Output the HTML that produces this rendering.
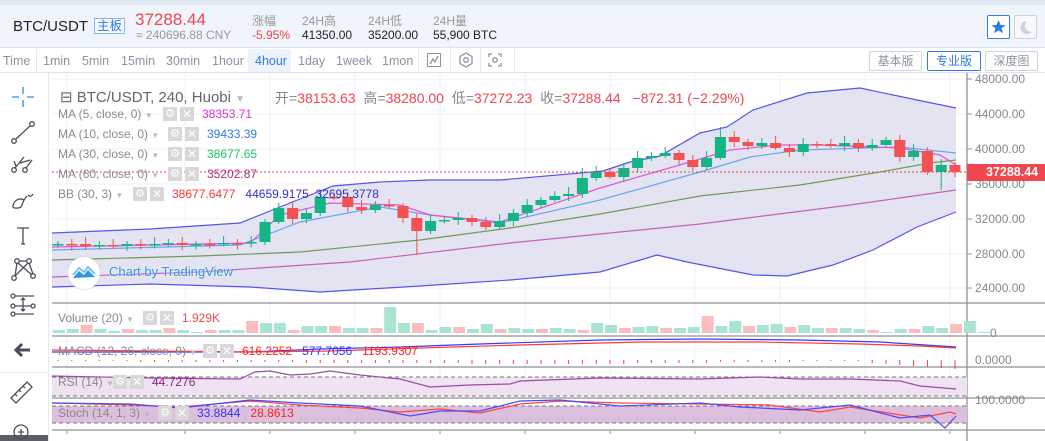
<!DOCTYPE html>
<html><head><meta charset="utf-8"><style>
*{margin:0;padding:0;box-sizing:border-box}
body{width:1045px;height:441px;overflow:hidden;background:#fff;font-family:"Liberation Sans","Noto Sans CJK SC",sans-serif;position:relative}
.a{position:absolute;white-space:nowrap}
</style></head><body>
<div class="a" style="left:0;top:0;width:1045px;height:5px;background:#e2e8f1"></div>
<div class="a" style="left:0;top:5px;width:1045px;height:43px;background:#f0f4fb;border-bottom:1px solid #dde3ec"></div>
<div class="a" style="left:13px;top:18px;font-size:15px;color:#222">BTC/USDT</div>
<div class="a" style="left:94px;top:18px;font-size:12.5px;color:#2f7ae5;border:1px solid #8fb5ee;padding:0 2px;line-height:14px;background:#f4f8ff">主板</div>
<div class="a" style="left:135px;top:10px;font-size:17px;color:#f0464f">37288.44</div>
<div class="a" style="left:136px;top:28px;font-size:12px;color:#999">≈ 240696.88 CNY</div>
<div class="a" style="left:252px;top:12px;font-size:12px;color:#999">涨幅</div>
<div class="a" style="left:252px;top:28px;font-size:12px;color:#f0464f">-5.95%</div>
<div class="a" style="left:302px;top:12px;font-size:12px;color:#999">24H高</div>
<div class="a" style="left:302px;top:28px;font-size:12px;color:#222">41350.00</div>
<div class="a" style="left:368px;top:12px;font-size:12px;color:#999">24H低</div>
<div class="a" style="left:368px;top:28px;font-size:12px;color:#222">35200.00</div>
<div class="a" style="left:433px;top:12px;font-size:12px;color:#999">24H量</div>
<div class="a" style="left:433px;top:28px;font-size:12px;color:#222">55,900 BTC</div>
<div class="a" style="left:987px;top:15px;width:23px;height:24px;border:1px solid #2f7ae5;border-radius:2px;background:#fff"><svg width="21" height="22"><polygon points="10.5,4 12.6,9 17.5,9.2 13.6,12.3 15,17.3 10.5,14.4 6,17.3 7.4,12.3 3.5,9.2 8.4,9" fill="#2f7ae5"/></svg></div>
<div class="a" style="left:1014px;top:15px;width:23px;height:24px;border:1px solid #ccd3dd;border-radius:2px;background:#f6f8fb"><svg width="21" height="22"><path d="M12 5a6.5 6.5 0 1 0 5 10.5A6 6 0 0 1 12 5z" fill="#cdd3dc"/></svg></div>
<div class="a" style="left:0;top:72px;width:1045px;height:1px;background:#dde3ec"></div>
<div class="a" style="left:248px;top:49px;width:43px;height:23px;background:#eef2fa"></div>
<div class="a" style="top:54px;font-size:12.5px;color:#8a94a0;left:0;width:1045px;height:18px">
<span class="a" style="left:3px">Time</span><span class="a" style="left:43px">1min</span><span class="a" style="left:82px">5min</span><span class="a" style="left:121px">15min</span><span class="a" style="left:166px">30min</span><span class="a" style="left:212px">1hour</span><span class="a" style="left:255px;color:#2f7ae5">4hour</span><span class="a" style="left:298px">1day</span><span class="a" style="left:336px">1week</span><span class="a" style="left:382px">1mon</span></div>
<div class="a" style="left:36px;top:49px;width:1px;height:23px;background:#e3e8ef"></div>
<div class="a" style="left:418px;top:49px;width:1px;height:23px;background:#e3e8ef"></div>
<div class="a" style="left:450px;top:49px;width:1px;height:23px;background:#e3e8ef"></div>
<div class="a" style="left:480px;top:49px;width:1px;height:23px;background:#e3e8ef"></div>
<div class="a" style="left:514px;top:49px;width:1px;height:23px;background:#e3e8ef"></div>
<svg class="a" style="left:420px;top:49px" width="95" height="23">
<rect x="7.5" y="4.5" width="13" height="13" fill="none" stroke="#8a94a0"/><path d="M10 15l3-5 2 3 3-6" fill="none" stroke="#8a94a0" stroke-width="1.3"/>
<polygon points="46,4 52,7.5 52,14.5 46,18 40,14.5 40,7.5" fill="none" stroke="#8a94a0" stroke-width="1.3"/><circle cx="46" cy="11" r="2.3" fill="none" stroke="#8a94a0" stroke-width="1.3"/>
<path d="M69 8V5h3M78 5h3v3M81 14v3h-3M72 17h-3v-3" fill="none" stroke="#8a94a0" stroke-width="1.3"/><circle cx="75" cy="11" r="2.2" fill="none" stroke="#8a94a0" stroke-width="1.3"/>
</svg>
<div class="a" style="left:869px;top:51px;width:53px;height:20px;border:1px solid #cfd6df;border-radius:2px;font-size:12px;color:#8a94a0;text-align:center;line-height:18px">基本版</div>
<div class="a" style="left:927px;top:51px;width:54px;height:20px;border:1px solid #2f7ae5;border-radius:2px;font-size:12px;color:#2f7ae5;text-align:center;line-height:18px">专业版</div>
<div class="a" style="left:985px;top:51px;width:53px;height:20px;border:1px solid #cfd6df;border-radius:2px;font-size:12px;color:#8a94a0;text-align:center;line-height:18px">深度图</div>
<div class="a" style="left:48px;top:73px;width:1px;height:368px;background:#e6e9ee"></div>
<div class="a" style="left:0;top:372px;width:48px;height:1px;background:#e6e9ee"></div>
<div class="a" style="left:0;top:435px;width:48px;height:6px;background:#5a5f66"></div>
<svg class="a" style="left:0;top:73px" width="50" height="368" fill="none" stroke="#4a4f57" stroke-width="1.3">
<path d="M23 14v7M23 27v7M12 24h7M27 24h7" stroke="#2f8de4"/>
<circle cx="14" cy="68" r="2.3"/><circle cx="32" cy="51" r="2.3"/><path d="M16 66l14-13"/>
<circle cx="14" cy="97" r="2.3"/><circle cx="25" cy="97" r="2.3"/><path d="M15 95l9-11M16 93l-2-5M26 95l6-8M20 90l10-3"/>
<path d="M13 134c0-6 6-10 11-7l-3 7c-3 2-8 1-8 0zM24 127l3-4M28 122c2 2 4 1 5-1"/>
<path d="M17 155h12M23 155v16M21 171h4"/>
<circle cx="14" cy="205" r="2.3"/><circle cx="17" cy="188" r="2.3"/><circle cx="29" cy="188" r="2.3"/><circle cx="33" cy="203" r="2.3"/><path d="M15 203l2-13M18 190l14 12M28 190l-13 13M29 190l4 11M19 188h8"/>
<circle cx="13" cy="223" r="2"/><circle cx="13" cy="233" r="2"/><circle cx="13" cy="241" r="2"/><circle cx="33" cy="233" r="2"/><path d="M15 223h19M15 241h19M15 233h16M23 225v13M21 227l2-2 2 2M21 236l2 2 2-2"/>
<path d="M18 277h12" stroke-width="3"/><path d="M22 271l-6 6 6 6" stroke-width="3"/>
<path d="M11 325l16-16 5 5-16 16zM15 321l2 2M19 317l2 2M23 313l2 2"/>
<circle cx="21" cy="359" r="7"/><path d="M18 359h6M21 356v6"/>
</svg>
<svg id="ch" class="a" style="left:0;top:73px" width="1045" height="368"></svg>
<div class="a" style="left:60px;top:88px;font-size:15px;color:#666">⊟ BTC/USDT, 240, Huobi <span style="color:#bbb;font-size:10px">▼</span></div>
<div class="a" style="left:275px;top:88px;font-size:14px;color:#888">开=<span style="color:#f0464f">38153.63</span> &nbsp;高=<span style="color:#f0464f">38280.00</span> &nbsp;低=<span style="color:#f0464f">37272.23</span> &nbsp;收=<span style="color:#f0464f">37288.44</span> &nbsp; <span style="color:#f0464f">−872.31 (−2.29%)</span></div>
<div id="lg"></div>
<div class="a" style="left:967px;top:164px;width:78px;height:17px;background:#f0464f;color:#fff;font-size:12.5px;font-weight:bold;line-height:17px;padding-left:19px">37288.44</div>
<div class="a" style="left:68px;top:257px;width:32px;height:32px;border-radius:16px;background:#fff;box-shadow:0 0 2px #ccc"><svg width="32" height="32"><path d="M5 21l6-7 5 4 4-5 7 7z" fill="#2d97e1"/><path d="M5 18l6-7 5 4 4-5 7 7" fill="none" stroke="#7ec0ee" stroke-width="2"/></svg></div>
<div class="a" style="left:109px;top:264px;font-size:13px;color:#2d97e1;text-shadow:0 0 2px #fff">Chart by TradingView</div>
<script>
const s=document.getElementById('ch');let h='';
const T=73;
function Y(y){return y-T}
function pl(pts,c,w,extra){return `<polyline points="${pts.map(p=>p[0]+','+Y(p[1])).join(' ')}" fill="none" stroke="${c}" stroke-width="${w||1}" ${extra||''}/>`}
for(let x of [67,185,270,355,440,525,610,695,780,865,950])h+=`<line x1="${x}" y1="0" x2="${x}" y2="357" stroke="#f0f2f5"/>`;
for(let y of [79,114,149,184,219,254,288])h+=`<line x1="52" y1="${Y(y)}" x2="967" y2="${Y(y)}" stroke="#f0f2f5"/>`;
const up=[[52,233],[150,229],[240,223],[300,199],[333,186],[380,182],[430,180],[500,180],[603,171],[630,162],[660,156],[700,133],[727,127],[753,110],[807,93],[860,88],[917,100],[956,108]];
const lo=[[52,287],[150,284],[250,287],[320,292],[420,286],[510,280],[600,272],[657,255],[687,262],[753,275],[787,276],[833,265],[873,250],[917,227],[956,212]];
h+=`<polygon points="${up.concat(lo.slice().reverse()).map(p=>p[0]+','+Y(p[1])).join(' ')}" fill="#e3e3f1"/>`;
h+=pl(up,'#5555ee',1.2)+pl(lo,'#5555ee',1.2);
h+=pl([[52,277],[200,272],[350,262],[510,243],[700,224],[850,205],[956,190]],'#c862b5',1.2);
h+=pl([[52,260],[200,256],[300,252],[420,240],[510,228],[600,214],[700,196],[800,185],[880,172],[930,163],[956,160]],'#6f9c55',1.2);
h+=pl([[52,250],[240,245],[300,222],[380,207],[430,215],[500,223],[600,200],[700,172],[750,157],[800,150],[900,147],[956,153]],'#6aa6ee',1.2);
h+=pl([[52,247],[250,243],[280,215],[330,203],[400,205],[430,215],[500,222],[600,188],[690,162],[730,150],[780,145],[820,145],[900,148],[940,155],[956,165]],'#e456d6',1.2);
const c=[244,244,246,245,246,244,245,244,243,245,244,244,243,243,242,222,208,219,213,197,197,207,210,205,206,218,231,221,220,218,222,227,221,213,205,200,196,194,178,172,177,168,158,156,153,160,167,158,137,142,146,143,148,152,144,144,146,143,148,145,140,157,151,172,165,172];
let o=245;
c.forEach((cl,i)=>{const x=58+i*13.8;const g=cl<o;const col=g?'#14b484':'#f25252';
let t=Math.min(o,cl),b=Math.max(o,cl);if(b-t<1.5)b=t+1.5;
let wt=t-3-(i*7%5),wb=b+2+(i*3%4);if(i==26)wb=255;if(i==64)wb=190;if(i==38||i==48)wt-=6;
h+=`<line x1="${x}" y1="${Y(wt)}" x2="${x}" y2="${Y(wb)}" stroke="${col}"/><rect x="${x-5.5}" y="${Y(t)}" width="11" height="${b-t}" fill="${col}"/>`;o=cl;});
h+=`<line x1="52" y1="${Y(172)}" x2="967" y2="${Y(172)}" stroke="#f0464f" stroke-dasharray="2,2"/>`;
for(let y of [303,336,367,398,430])h+=`<line x1="52" y1="${Y(y)}" x2="1045" y2="${Y(y)}" stroke="#8d9199" stroke-width="1.3"/>`;
h+=`<line x1="967" y1="0" x2="967" y2="${Y(441)}" stroke="#8d9199" stroke-width="1.3"/>`;
const vv=[3,4,8,4,2,4,3,3,5,3,1,3,3,3,12,10,10,3,7,7,7,5,5,5,26,10,10,3,6,6,4,9,4,5,4,4,5,4,3,10,8,5,6,7,5,5,6,17,7,12,7,8,9,6,8,5,5,5,4,3,1,4,4,7,5,9,12,1];
vv.forEach((v,i)=>{const x=53+i*13.8;const g=(i*5+2)%3!=0;h+=`<rect x="${x}" y="${Y(333-v)}" width="12" height="${v}" fill="${g?'#a9e4d2':'#f9bdbd'}"/>`});
h+=pl([[52,352],[250,352],[320,349],[400,347],[480,344],[600,340],[700,339],[800,340],[880,342],[956,347]],'#3a3aff',1.2);
h+=pl([[52,350],[250,352],[330,351],[420,348],[520,345],[640,342],[760,342],[860,344],[920,346],[956,348]],'#ff3a3a',1.2);
for(let i=0;i<66;i++){const x=58+i*13.8;let hh=[1,2,2,3,3,4,4,3,2,1,0][Math.floor(i/6)]||1;if(i>58)hh=i-56;h+=`<line x1="${x}" y1="${Y(360)}" x2="${x}" y2="${Y(360+hh)}" stroke="#ff3a3a"/>`}
h+=`<rect x="52" y="${Y(377)}" width="915" height="19" fill="#efe3f1"/>`;
h+=`<line x1="52" y1="${Y(377)}" x2="967" y2="${Y(377)}" stroke="#777" stroke-dasharray="4,3"/><line x1="52" y1="${Y(396)}" x2="967" y2="${Y(396)}" stroke="#777" stroke-dasharray="4,3"/>`;
h+=pl([[52,376],[150,378],[240,379],[255,372],[270,371],[290,375],[310,374],[330,371],[360,375],[400,379],[430,387],[470,385],[510,384],[520,381],[600,378],[700,379],[760,377],[800,379],[850,379],[900,381],[920,386],[956,389]],'#a04aa8',1.2);
h+=`<rect x="52" y="${Y(406)}" width="915" height="17" fill="#dcbfdd"/>`;
h+=`<line x1="52" y1="${Y(406)}" x2="967" y2="${Y(406)}" stroke="#777" stroke-dasharray="4,3"/><line x1="52" y1="${Y(423)}" x2="967" y2="${Y(423)}" stroke="#777" stroke-dasharray="4,3"/>`;
h+=pl([[52,403],[130,405],[180,407],[250,401],[300,405],[360,408],[400,412],[440,409],[480,413],[520,404],[560,401],[620,403],[700,404],[770,405],[820,412],[850,407],[920,418],[950,412],[956,414]],'#ff4444',1.2);
h+=pl([[52,403],[130,404],[180,408],[250,400],[300,403],[360,406],[410,416],[440,411],[480,411],[520,401],[560,400],[620,406],[700,403],[740,407],[800,410],[850,405],[900,418],[930,415],[945,428],[956,416]],'#4a4aff',1.2);
const L=[[48000,79],[44000,114],[40000,149],[36000,184],[32000,219],[28000,254],[24000,288]];
L.forEach(([p,y])=>{h+=`<line x1="967" y1="${Y(y)}" x2="972" y2="${Y(y)}" stroke="#8d9199"/><text x="975" y="${Y(y)+4}" font-size="12" fill="#888" font-family="Liberation Sans">${p}.00</text>`});
h+=`<text x="990" y="${Y(337)}" font-size="12" fill="#888" font-family="Liberation Sans">0</text><text x="975" y="${Y(364)}" font-size="12" fill="#888" font-family="Liberation Sans">0.0000</text><text x="975" y="${Y(404)}" font-size="12" fill="#888" font-family="Liberation Sans">100.0000</text>`;
for(let x of [67,185,270,355,440,525,610,695,780,865,950])h+=`<line x1="${x}" y1="${Y(431)}" x2="${x}" y2="${Y(434)}" stroke="#8d9199"/>`;
s.innerHTML=h;
const lg=[[107,'MA (5, close, 0)',170,'38353.71','#e02fd6'],[127,'MA (10, close, 0)',175,'39433.39','#2f7ae5'],[147,'MA (30, close, 0)',175,'38677.65','#18c86a'],[167,'MA (60, close, 0)',175,'35202.87','#b02f7a'],[187,'BB (30, 3)',140,'<span style="color:#f33">38677.6477</span> &nbsp; <span style="color:#33c">44659.9175 &nbsp;32695.3778</span>',''],[311,'Volume (20)',150,'1.929K','#f04a4a'],[344,'MACD (12, 26, close, 9)',210,'616.2252 &nbsp; <span style="color:#33f">577.7056</span> &nbsp; 1193.9307','#f22'],[375,'RSI (14)',120,'44.7276','#8a1f8a'],[406,'Stoch (14, 1, 3)',165,'<span style="color:#33f">33.8844</span> &nbsp; <span style="color:#f22">28.8613</span>','']];
let g='';lg.forEach(([y,n,bx,v,c])=>{g+=`<div class="a" style="left:58px;top:${y}px;font-size:12px;color:#8a8a8a">${n} <span style="color:#bbb;font-size:8px">▼</span></div><div class="a" style="left:${bx-7}px;top:${y}px;width:14px;height:14px;background:#d8d8d8;color:#fff;font-size:11px;text-align:center;line-height:14px">⚙</div><div class="a" style="left:${bx+10}px;top:${y}px;width:14px;height:14px;background:#d8d8d8;color:#fff;font-size:12px;text-align:center;line-height:14px">✕</div><div class="a" style="left:${bx+32}px;top:${y}px;font-size:12px;color:${c}">${v}</div>`});
document.getElementById('lg').innerHTML=g;
</script>
</body></html>
